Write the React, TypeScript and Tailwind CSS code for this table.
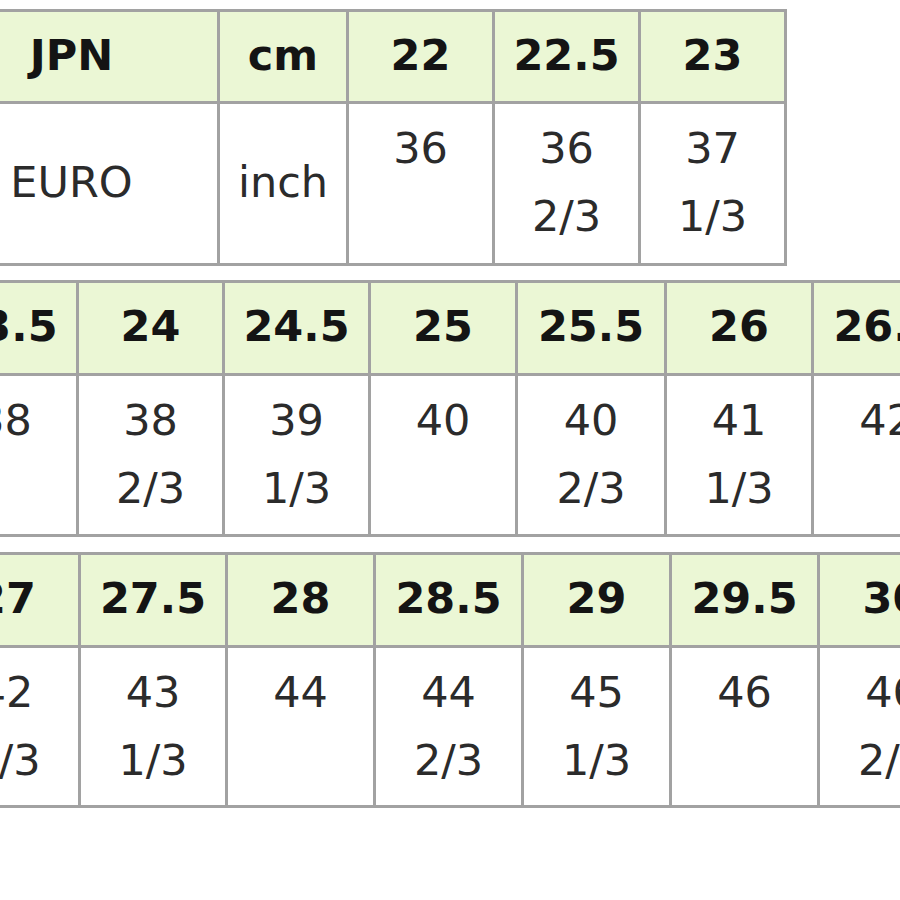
import React from "react";

type Col = { head: string; body: string[]; single?: boolean };

type TableSpec = {
  wrap: string;
  grid: string;
  cols: Col[];
};

const tables: TableSpec[] = [
  {
    wrap: "mt-[9px] ml-[-77px]",
    grid: "grid-cols-[291px_126px_143px_143px_143px] grid-rows-[89px_159px]",
    cols: [
      { head: "JPN", body: ["EURO"], single: true },
      { head: "cm", body: ["inch"], single: true },
      { head: "22", body: ["36"] },
      { head: "22.5", body: ["36", "2/3"] },
      { head: "23", body: ["37", "1/3"] },
    ],
  },
  {
    wrap: "mt-[14px] ml-[-70px]",
    grid: "grid-cols-[143px_143px_143px_144px_146px_144px_145px] grid-rows-[90px_158px]",
    cols: [
      { head: "23.5", body: ["38"] },
      { head: "24", body: ["38", "2/3"] },
      { head: "24.5", body: ["39", "1/3"] },
      { head: "25", body: ["40"] },
      { head: "25.5", body: ["40", "2/3"] },
      { head: "26", body: ["41", "1/3"] },
      { head: "26.5", body: ["42"] },
    ],
  },
  {
    wrap: "mt-[15px] ml-[-69px]",
    grid: "grid-cols-[144px_144px_145px_145px_145px_145px_145px] grid-rows-[90px_157px]",
    cols: [
      { head: "27", body: ["42", "2/3"] },
      { head: "27.5", body: ["43", "1/3"] },
      { head: "28", body: ["44"] },
      { head: "28.5", body: ["44", "2/3"] },
      { head: "29", body: ["45", "1/3"] },
      { head: "29.5", body: ["46"] },
      { head: "30", body: ["46", "2/3"] },
    ],
  },
];

function SizeTable({ spec }: { spec: TableSpec }) {
  return (
    <div className={`${spec.wrap} w-max`}>
      <div
        className={`grid grid-flow-col ${spec.grid} gap-[3px] p-[3px] bg-[#a2a2a2]`}
      >
        {spec.cols.map((c, i) => (
          <React.Fragment key={i}>
            <div className="bg-[#ebf7d5] flex items-center justify-center pb-[3px] text-[43px] font-bold text-[#141414] leading-none whitespace-nowrap">
              {c.head}
            </div>
            {c.single ? (
              <div className="bg-white flex items-center justify-center pb-[4px] text-[43px] text-[#2b2b2b] leading-[68px] whitespace-nowrap">
                {c.body[0]}
              </div>
            ) : (
              <div className="bg-white flex flex-col items-center pt-[10px] text-[43px] text-[#2b2b2b] leading-[68px] whitespace-nowrap">
                {c.body.map((t, j) => (
                  <span key={j}>{t}</span>
                ))}
              </div>
            )}
          </React.Fragment>
        ))}
      </div>
    </div>
  );
}

export default function App() {
  return (
    <div
      className="w-[900px] h-[900px] overflow-hidden bg-white"
      style={{ fontFamily: '"DejaVu Sans", "Noto Sans", sans-serif' }}
    >
      {tables.map((t, i) => (
        <SizeTable key={i} spec={t} />
      ))}
    </div>
  );
}
